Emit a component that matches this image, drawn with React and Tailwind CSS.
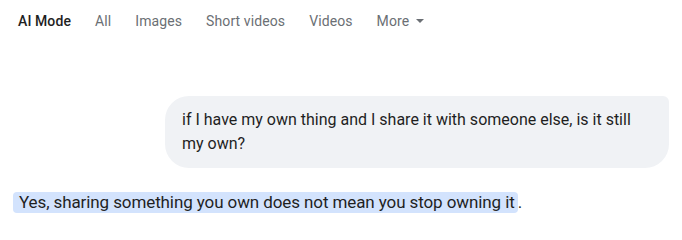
import React from 'react';

const tabs = ['All', 'Images', 'Short videos', 'Videos'];

const App = () => {
  return (
    <div className="w-[682px] h-[240px] bg-white overflow-hidden" style={{ fontFamily: 'Roboto, Arial, sans-serif' }}>
      <nav className="flex items-center h-[42px] pl-[18px] gap-[24px] text-[14px]">
        <span className="font-medium text-[#1f1f1f] tracking-[0.1px]">AI Mode</span>
        {tabs.map((t) => (
          <span key={t} className="text-[#6b6f74] tracking-[0.1px]">{t}</span>
        ))}
        <span className="flex items-center gap-[7px] text-[#6b6f74] tracking-[0.1px]">
          More
          <svg width="8" height="4" viewBox="0 0 8 4">
            <path d="M0 0h8L4 4z" fill="#6b6f74" />
          </svg>
        </span>
      </nav>

      <div className="flex justify-end pr-[13px] mt-[54px]">
        <div className="bg-[#f0f2f5] rounded-3xl rounded-tr-md pl-[17px] pr-[28px] py-[12px] w-[504px] text-[16px] leading-[24px] text-[#1f1f1f]">
          if I have my own thing and I share it with someone else, is it still my own?
        </div>
      </div>

      <div className="mt-[22px] pl-[13px] flex items-center text-[17px] text-[#1f1f1f]">
        <span className="bg-[#d3e3fd] rounded-[4px] pl-[6px] pr-[3px] leading-[21px] tracking-[-0.1px]">
          Yes, sharing something you own does not mean you stop owning it
        </span>
        <span>.</span>
      </div>
    </div>
  );
};

export default App;
